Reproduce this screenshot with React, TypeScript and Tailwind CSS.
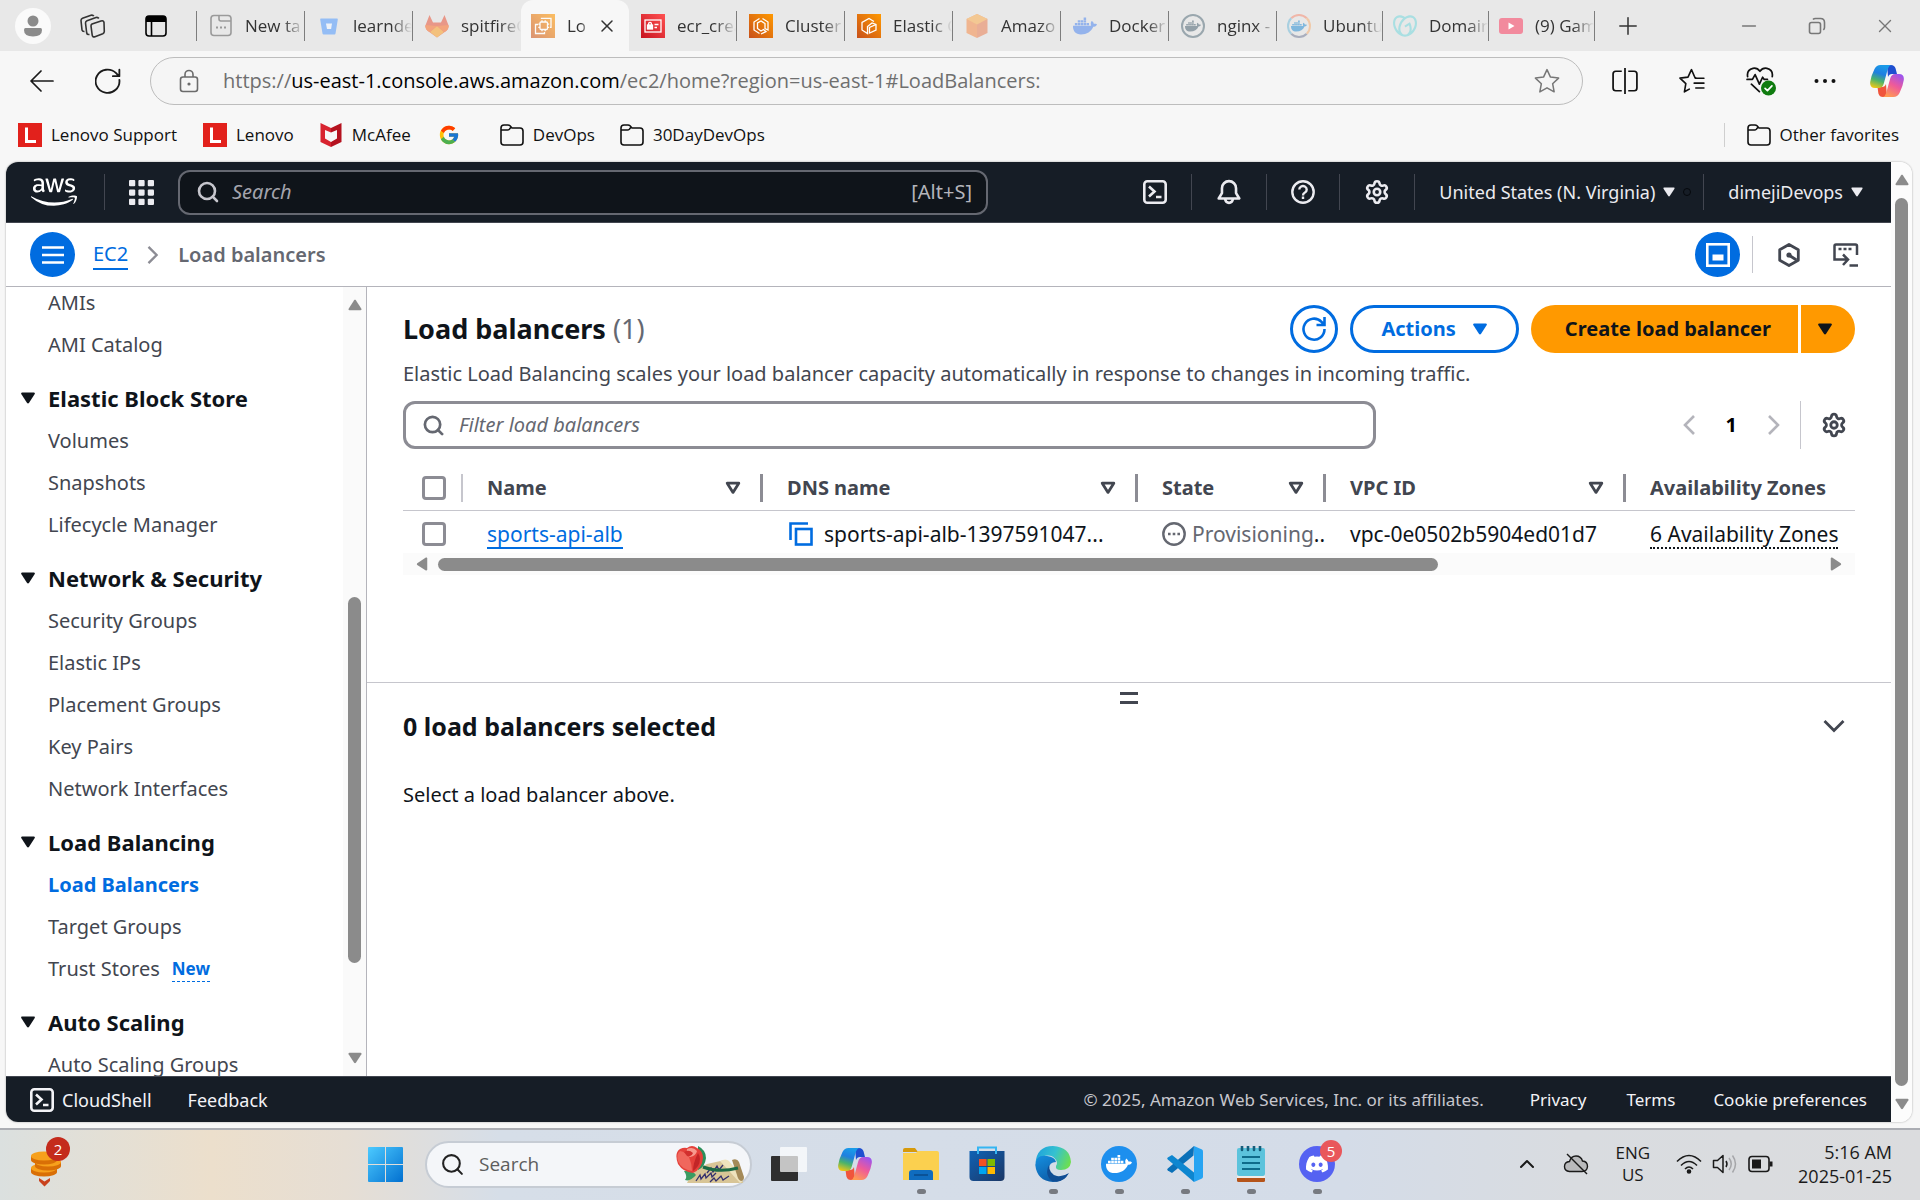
import React from "react";
import { Search, Settings, Plus, X, Minus, ChevronUp } from "lucide-react";
import { FaDocker, FaDiscord, FaAws } from "react-icons/fa6";
import { SiGodaddy } from "react-icons/si";
import { FcGoogle } from "react-icons/fc";

function Down({ className = "w-4 h-3" }: { className?: string }) {
  return (
    <svg viewBox="0 0 16 13" className={className} fill="currentColor" aria-hidden="true">
      <path d="M1.6 0.5h12.8c.9 0 1.3.9.9 1.6l-6.3 9.8c-.5.7-1.5.7-2 0L.7 2.1C.3 1.4.7.5 1.6.5z" />
    </svg>
  );
}

function SortArrow() {
  return (
    <svg viewBox="0 0 16 14" className="w-4 h-3.5" fill="none" stroke="currentColor" strokeWidth="2.8" strokeLinejoin="round" aria-hidden="true">
      <path d="M2.2 2.2h11.6L8 11.4z" />
    </svg>
  );
}

/* ---------- Browser icons ---------- */

function AwsTile({ kind }: { kind: "ec2" | "ecr" | "ecs" | "eb" }) {
  const from = kind === "ecr" ? "#c7131f" : "#c8511b";
  const to = kind === "ecr" ? "#ff5252" : "#ff9900";
  return (
    <svg viewBox="0 0 24 24" className={kind === "ec2" ? "size-6 opacity-60" : "size-6"} aria-hidden="true">
      <defs>
        <linearGradient id={"tile-" + kind} x1="0" y1="1" x2="1" y2="0">
          <stop offset="0" stopColor={from} />
          <stop offset="1" stopColor={to} />
        </linearGradient>
      </defs>
      <rect width="24" height="24" fill={"url(#tile-" + kind + ")"} />
      <g fill="none" stroke="#fff" strokeWidth="1.3">
        {kind === "ec2" && (
          <>
            <rect x="9" y="8" width="7.500" height="7.500" rx="1" />
            <path d="M11 8V6.300M14.200 8V6.300M11 17.200v-1.700M14.200 17.200v-1.700M9 10.200H7.300M9 13.300H7.300M18.200 10.200h-1.700M18.200 13.300h-1.700" />
            <path d="M10.500 5V4.300H20v9h-1M7 10.500H4.500v9h9V18" />
          </>
        )}
        {kind === "ecr" && (
          <>
            <rect x="4" y="6" width="16" height="12" />
            <rect x="6.500" y="11" width="5" height="4" fill="#fff" />
            <path d="M7.600 11V9.800a1.400 1.400 0 0 1 2.800 0V11M13.500 10.500h4M13.500 13.500h2.500" />
          </>
        )}
        {kind === "ecs" && (
          <path d="M10.500 4.500 5 8v8l5.500 3.500M13.500 4.500 19 8v8l-3-1.500v-5L12 7 8.500 9v5.500L12 17l2.500-1.500 2.500 2-5 2.500" />
        )}
        {kind === "eb" && (
          <path d="M17 7.500 12 4.500 5 8.500v7.500l5.500 3.500v-7l4.500-3.500 4 1.500v5.500L12.500 19v-5.500L19 10.500" />
        )}
      </g>
    </svg>
  );
}

function NewTabIcon() {
  return (
    <svg viewBox="0 0 24 24" className="size-6" fill="none" stroke="#9a9a9a" strokeWidth="1.600" aria-hidden="true">
      <rect x="2" y="1.500" width="20" height="20" rx="3" />
      <path d="M10 1.500V5q0 2 2 2h10" />
      <path d="M7 13.500h2M11 13.500h2M15 13.500h2" strokeWidth="2" />
    </svg>
  );
}

function BucketIcon() {
  return (
    <svg viewBox="0 0 24 24" className="size-6" aria-hidden="true">
      <path d="M4 4.500q-1 0-.8 1l2.300 14q.2 1 1.200 1h10.800q.9 0 1-.9L20.800 5.500q.2-1-.8-1z" fill="#94bdf5" />
      <path d="M9 9.500h6l-.9 5.500H10z" fill="#eef2f8" />
    </svg>
  );
}

function FoxIcon() {
  return (
    <svg viewBox="0 0 24 24" className="size-6 opacity-55" aria-hidden="true">
      <path d="M4.500 1 0.600 11q-1 3.500 2.200 6L12 23.500l9.200-6.500q3.200-2.500 2.200-6L19.500 1 16 8.500H8z" fill="#e8553b" />
      <path d="M12 23.500 5 18l7-6 7 6z" fill="#fca326" />
      <path d="m0.600 11 11.400 1-7 6-2.200-1Q-.4 14.500.6 11zM23.400 11 12 12l7 6 2.200-1q3.200-2.500 2.200-6z" fill="#fc6d26" />
    </svg>
  );
}

function CubeIcon() {
  return (
    <svg viewBox="0 0 24 24" className="size-6" aria-hidden="true">
      <path d="M12 0 1.500 5v14L12 24z" fill="#f0b590" />
      <path d="m12 0 10.500 5v14L12 24z" fill="#e9ae96" />
      <path d="M12 0 1.500 5 12 10.500 22.500 5z" fill="#f3c893" />
    </svg>
  );
}

function RingDocker({ color }: { color: boolean }) {
  return (
    <span className={"flex size-6 items-center justify-center rounded-full border-2 " + (color ? "border-t-[#f0b6a8] border-r-[#f0c9a8] border-b-[#a9aebd] border-l-[#a8cfe0]" : "border-[#9aa7ae]")}>
      <FaDocker className={"size-4 " + (color ? "text-[#7fb7dd]" : "text-[#93a0a8]")} />
    </span>
  );
}

function YoutubeIcon() {
  return (
    <svg viewBox="0 0 24 24" className="size-6" aria-hidden="true">
      <rect y="4" width="24" height="16" rx="3" fill="#f28a9d" />
      <path d="m9.500 8.500 6 3.500-6 3.500z" fill="#fff" />
    </svg>
  );
}

function Folder() {
  return (
    <svg viewBox="0 0 24 24" className="size-6" fill="none" stroke="#111" strokeWidth="1.600" strokeLinejoin="round" aria-hidden="true">
      <path d="M1 5q0-3 3-3h4q1.200 0 2 .8L12 5h8q3 0 3 3v11q0 3-3 3H4q-3 0-3-3z" />
      <path d="M1 7h6.500q1 0 1.800-.8L11 4.300" />
    </svg>
  );
}

function Lenovo() {
  return (
    <svg viewBox="0 0 24 24" className="size-6" aria-hidden="true">
      <rect width="24" height="24" fill="#e2211c" />
      <path d="M8.500 4.500v14H18" fill="none" stroke="#fff" strokeWidth="3" />
    </svg>
  );
}

function McAfee() {
  return (
    <svg viewBox="0 0 24 24" className="size-6" aria-hidden="true">
      <path d="M1.500 0 12 5v4.500L6 7v8.500l6 3.500v5L1.500 19z" fill="#d8232f" />
      <path d="M22.500 0 12 5v4.500L18 7v8.500L12 19v5l10.500-5z" fill="#b5121f" />
    </svg>
  );
}

function Copilot({ id, className = "size-[34px]" }: { id: string; className?: string }) {
  return (
    <svg viewBox="0 0 34 32" className={className} aria-hidden="true">
      <defs>
        <linearGradient id={id + "a"} x1="0.500" y1="0" x2="0.200" y2="1">
          <stop offset="0" stopColor="#1a9be8" />
          <stop offset="0.350" stopColor="#1f7fe0" />
          <stop offset="0.650" stopColor="#4bb36b" />
          <stop offset="1" stopColor="#f5c813" />
        </linearGradient>
        <linearGradient id={id + "b"} x1="0.800" y1="0" x2="0.300" y2="1">
          <stop offset="0" stopColor="#9a54f0" />
          <stop offset="0.500" stopColor="#ee5a9a" />
          <stop offset="1" stopColor="#ff9b52" />
        </linearGradient>
      </defs>
      <path d="M17 0h4q3.500 0 4.600 3.500L27 9h-5q-3 0-4 3z" fill="#1f4fd0" />
      <path d="M17 32h-4q-3.500 0-4.600-3.500L7.500 22H12q3 0 4-3z" fill="#f0553c" />
      <path d="M10.500 0H21q-2.300.8-3.200 4l-4 14.500q-1.200 4.500-5 4.500H5q-5.500 0-4.800-6Q1 11 4.500 4 6.500 0 10.500 0z" fill={"url(#" + id + "a)"} />
      <path d="M23.500 32H13q2.300-.8 3.200-4l4-14.500q1.200-4.500 5-4.500H29q5.500 0 4.800 6-.8 6-4.300 13-2 4-6 4z" fill={"url(#" + id + "b)"} />
    </svg>
  );
}

const tabs: { title: string; icon: React.ReactNode; active?: boolean }[] = [
  { title: "New ta", icon: <NewTabIcon /> },
  { title: "learnde", icon: <BucketIcon /> },
  { title: "spitfireG", icon: <FoxIcon /> },
  { title: "Lo", icon: <AwsTile kind="ec2" />, active: true },
  { title: "ecr_crea", icon: <AwsTile kind="ecr" /> },
  { title: "Cluster", icon: <AwsTile kind="ecs" /> },
  { title: "Elastic C", icon: <AwsTile kind="eb" /> },
  { title: "Amazo", icon: <CubeIcon /> },
  { title: "Docker", icon: <FaDocker className="size-6 text-[#94b3ec]" /> },
  { title: "nginx -", icon: <RingDocker color={false} /> },
  { title: "Ubuntu", icon: <RingDocker color /> },
  { title: "Domain", icon: <SiGodaddy className="size-6 text-[#a9dfe2]" /> },
  { title: "(9) Gam", icon: <YoutubeIcon /> },
];

function TabStrip() {
  return (
    <div className="flex h-[51px] shrink-0 items-center bg-[#e8e8e8] pl-[15px]">
      <button aria-label="Profile" className="flex size-9 items-center justify-center rounded-full bg-[#fafafa]">
        <svg viewBox="0 0 20 22" className="h-[22px] w-5" fill="#8b8b8b">
          <circle cx="10" cy="6" r="5.500" />
          <path d="M2.500 13h15q1.500 0 1.500 2 0 6.500-9 6.500T1 15q0-2 1.500-2z" />
        </svg>
      </button>
      <button aria-label="Workspaces" className="ml-[29px]">
        <svg viewBox="0 0 26 24" className="h-6 w-[26px]" fill="none" stroke="#333" strokeWidth="1.600" strokeLinejoin="round">
          <path d="m12 10 9-3q2.500-.8 3 1.500l.3 9q0 1.500-1.500 2.200l-7.800 3q-2.500.8-2.800-1.500L11 12q0-1.500 1-2z" />
          <path d="M9.500 20.500q-2.500.3-2.800-1.500L5.500 9q0-1.500 1.500-2.200l9-3.300q2-.5 2.800 1M4.500 17.500q-2 .2-2.500-1.500L1 6.500Q1 5 2.500 4.300L11 1.200q2-.5 2.800 1" />
        </svg>
      </button>
      <button aria-label="Tab actions" className="ml-[39px]">
        <svg viewBox="0 0 22 22" className="size-[22px]">
          <rect x="1" y="1" width="20" height="20" rx="3" fill="none" stroke="#000" strokeWidth="1.600" />
          <path d="M1 7V4q0-3 3-3h14q3 0 3 3v3z" />
          <path d="M6.500 7v14" stroke="#000" strokeWidth="1.600" />
        </svg>
      </button>
      <div className="ml-[29px] h-[30px] w-px bg-[#7d7d7d]" />
      <div className="flex h-full items-end" role="tablist">
        {tabs.map((t, i) => (
          <div
            key={t.title}
            role="tab"
            aria-selected={!!t.active}
            className={
              t.active
                ? "flex h-[51px] w-[108px] items-center rounded-t-xl bg-[#f7f7f7] pl-2.5"
                : i > 9
                  ? "flex h-[51px] w-[106px] items-center pl-2.5"
                  : "flex h-[51px] w-[108px] items-center pl-3"
            }
          >
            <span className="shrink-0">{t.icon}</span>
            <span className="ml-3 min-w-0 flex-1 overflow-hidden whitespace-nowrap text-[17px] leading-6 text-[#333] [mask-image:linear-gradient(to_right,#000_65%,transparent)]">
              {t.title}
            </span>
            {t.active ? (
              <button aria-label="Close tab" className="mr-3 ml-2 shrink-0 text-[#333]">
                <X className="size-5" strokeWidth={1.800} />
              </button>
            ) : t.title === "spitfireG" ? null : (
              <span className="h-[30px] w-px shrink-0 bg-[#7d7d7d]" />
            )}
          </div>
        ))}
      </div>
      <button aria-label="New tab" className="ml-[19px] text-[#333]">
        <Plus className="size-7" strokeWidth={1.300} />
      </button>
      <div className="ml-auto flex items-center gap-12 pr-6 text-[#777]">
        <button aria-label="Minimize"><Minus className="size-[22px]" strokeWidth={1.600} /></button>
        <button aria-label="Restore">
          <svg viewBox="0 0 18 18" className="size-[18px]" fill="none" stroke="currentColor" strokeWidth="1.600">
            <rect x="1.500" y="5.500" width="11" height="11" rx="2" />
            <path d="M5 2.500q.8-1 2.500-1h5q4 0 4 4v5q0 1.500-1.200 2.400" />
          </svg>
        </button>
        <button aria-label="Close"><X className="size-[22px]" strokeWidth={1.500} /></button>
      </div>
    </div>
  );
}

function Toolbar() {
  return (
    <div className="flex h-[60px] shrink-0 items-center pl-[29px] pr-4">
      <button aria-label="Back">
        <svg viewBox="0 0 24 22" className="h-[22px] w-[26px]" fill="none" stroke="#1a1a1a" strokeWidth="1.700" strokeLinecap="round" strokeLinejoin="round"><path d="M23 11H1.500M11 1 1 11l10 10" /></svg>
      </button>
      <button aria-label="Refresh" className="ml-10">
        <svg viewBox="0 0 24 24" className="size-[26px]" fill="none" stroke="#1a1a1a" strokeWidth="1.700" strokeLinecap="round" strokeLinejoin="round"><path d="M22.500 11A11 10.700 0 1 1 19.500 4.800L22 7.500M22.500 1.500v6h-6" /></svg>
      </button>
      <div className="ml-[29px] flex h-12 min-w-0 flex-1 items-center rounded-full border border-[#bdbdbd] bg-[#f5f5f5] px-[22px]">
        <svg viewBox="0 0 20 24" className="ml-1.5 h-6 w-5 shrink-0" fill="none" stroke="#6b6b6b" strokeWidth="1.600" aria-hidden="true">
          <rect x="1.500" y="8" width="17" height="14.500" rx="2.500" />
          <path d="M6 8V5.500a4 4 0 0 1 8 0V8" />
          <circle cx="10" cy="15" r="0.800" fill="#6b6b6b" />
        </svg>
        <p className="ml-6 flex-1 whitespace-nowrap text-[20px] leading-7 text-[#6f6f6f]">
          https://<span className="text-black">us-east-1.console.aws.amazon.com</span>/ec2/home?region=us-east-1#LoadBalancers:
        </p>
        <button aria-label="Add to favorites">
          <svg viewBox="0 0 24 24" className="size-[26px]" fill="none" stroke="#777" strokeWidth="1.400" strokeLinejoin="round"><path d="m12 1.500 3.200 6.900 7.500.9-5.500 5.200 1.400 7.500-6.600-3.700L5.400 22l1.400-7.500L1.300 9.300l7.500-.9z" /></svg>
        </button>
      </div>
      <div className="ml-[29px] flex items-center gap-[41px]">
        <button aria-label="Split screen">
          <svg viewBox="0 0 24 24" className="size-[26px]" fill="none" stroke="#111" strokeWidth="1.600"><path d="M9 3H3.500Q1 3 1 5.500v13Q1 21 3.500 21H9M15 3h5.500Q23 3 23 5.500v13q0 2.500-2.500 2.500H15M12 0v24" /></svg>
        </button>
        <button aria-label="Favorites">
          <svg viewBox="0 0 24 24" className="size-[26px]" fill="none" stroke="#111" strokeWidth="1.500" strokeLinejoin="round" strokeLinecap="round"><path d="M15.500 9H14.800L11.500 1.500 8.300 8.400.9 9.300l5.400 5.200L5 22l4.500-2.500M15 9.500h8M14 14h9M15.500 18.500H23" /></svg>
        </button>
        <button aria-label="Browser essentials">
          <svg viewBox="0 0 28 28" className="-mr-1 size-[30px]" fill="none" stroke="#111" strokeWidth="1.600" strokeLinejoin="round" strokeLinecap="round">
            <path d="M1.500 10Q.5 3.500 6.500 2.200 10.500 1.500 13 5q2.500-3.500 6.500-2.800 6 1.300 5 7.800M1 12.500h5L8.500 8l4 9 3-6.500 1.500 2h3M5 17l7.500 7" />
            <circle cx="21" cy="20.500" r="7" fill="#107c10" stroke="none" />
            <path d="m17.800 20.800 2.200 2.200 4.200-4.500" stroke="#fff" />
          </svg>
        </button>
        <button aria-label="Settings and more">
          <svg viewBox="0 0 24 24" className="size-6" fill="#111"><circle cx="3.500" cy="12" r="2" /><circle cx="12" cy="12" r="2" /><circle cx="20.500" cy="12" r="2" /></svg>
        </button>
        <button aria-label="Copilot" className="-ml-2"><Copilot id="tb" /></button>
      </div>
    </div>
  );
}

function Bookmark({ icon, label, gap }: { icon: React.ReactNode; label: string; gap: string }) {
  return (
    <a href="#" aria-label={label} className={"flex items-center gap-[9px] whitespace-nowrap " + gap}>
      {icon}
      {label !== "Google" && <span className="text-[17px] leading-6 text-[#111]">{label}</span>}
    </a>
  );
}

function FavoritesBar() {
  return (
    <nav aria-label="Favorites bar" className="flex h-[51px] shrink-0 items-center pb-[3px] pl-[18px] pr-[21px]">
      <Bookmark icon={<Lenovo />} label="Lenovo Support" gap="mr-[26px]" />
      <Bookmark icon={<Lenovo />} label="Lenovo" gap="mr-[25px]" />
      <Bookmark icon={<McAfee />} label="McAfee" gap="mr-[27px]" />
      <Bookmark icon={<FcGoogle className="size-[22px]" />} label="Google" gap="mr-10" />
      <Bookmark icon={<Folder />} label="DevOps" gap="mr-[25px]" />
      <Bookmark icon={<Folder />} label="30DayDevOps" gap="" />
      <div className="ml-auto mr-[22px] h-6 w-px bg-[#cfcfcf]" />
      <Bookmark icon={<Folder />} label="Other favorites" gap="" />
    </nav>
  );
}

/* ---------- Console ---------- */

function ShellIcon() {
  return (
    <svg viewBox="0 0 24 24" className="size-6 shrink-0" fill="none" stroke="currentColor" strokeWidth="2.600" aria-hidden="true">
      <rect x="1.300" y="1.300" width="21.400" height="21.400" rx="3" />
      <path d="m6 6.500 5.500 5L6 16.500M13 17h5.500" />
    </svg>
  );
}

function Divider() {
  return <div className="h-9 w-px shrink-0 bg-[#424650]" />;
}

function ConsoleHeader() {
  return (
    <header className="flex h-[61px] shrink-0 items-center border-b border-[#424650] bg-[#161d26] text-[#ebebf0]">
      <a href="#" aria-label="AWS home" className="ml-[25px]"><FaAws className="size-[46px] text-white" /></a>
      <div className="ml-[27px]"><Divider /></div>
      <button aria-label="Services" className="ml-6">
        <svg viewBox="0 0 24 24" className="size-[25px]" fill="currentColor">
          {[0, 9, 18].map((y) => [0, 9, 18].map((x) => <rect key={x + "-" + y} x={x} y={y} width="6" height="6" rx="1" />))}
        </svg>
      </button>
      <label className="ml-6 flex h-[45px] w-[810px] items-center rounded-xl border-2 border-[#656871] bg-[#0f141a] px-3.5 pl-4">
        <Search className="size-6 shrink-0 text-[#c6c6cd]" strokeWidth={2.600} />
        <input aria-label="Search" placeholder="Search" className="ml-3 min-w-0 flex-1 bg-transparent text-[20px] italic outline-none placeholder:text-[#a4a4ad]" />
        <span className="text-[20px] text-[#b4b4bb]">[Alt+S]</span>
      </label>
      <div className="ml-auto flex items-center">
        <button aria-label="CloudShell" className="mr-6"><ShellIcon /></button>
        <Divider />
        <button aria-label="Notifications" className="mx-6">
          <svg viewBox="0 0 24 24" className="size-[26px]" fill="none" stroke="currentColor" strokeWidth="2.400" strokeLinejoin="round">
            <path d="M2.500 18 5.500 13V8.500a6.500 6.500 0 0 1 13 0V13l3 5zM8.500 18.500a3.500 3.500 0 0 0 7 0" />
          </svg>
        </button>
        <Divider />
        <button aria-label="Help" className="mx-6">
          <svg viewBox="0 0 24 24" className="size-6" fill="none" stroke="currentColor" strokeWidth="2.400">
            <circle cx="12" cy="12" r="10.700" />
            <path d="M8.300 9.500a3.700 3.500 0 1 1 5.600 3q-1.900 1-1.900 3M12 16.600V19" />
          </svg>
        </button>
        <Divider />
        <button aria-label="Settings" className="mx-6"><Settings className="size-[26px]" strokeWidth={2.400} /></button>
        <Divider />
        <button className="ml-6 flex items-center gap-2 whitespace-nowrap text-[18px] leading-6">
          United States (N. Virginia)
          <Down className="w-3 h-3" />
        </button>
        <span className="ml-2 mr-3 size-2 rounded-full border border-[#05080c]" />
        <Divider />
        <button className="ml-6 mr-7 flex items-center gap-2 whitespace-nowrap text-[18px] leading-6">
          dimejiDevops
          <Down className="w-3 h-3" />
        </button>
      </div>
    </header>
  );
}

function BreadcrumbBar() {
  return (
    <div className="flex h-16 shrink-0 items-center border-b border-[#b4b4bb] bg-white pl-6 pr-8 text-[#424650]">
      <button aria-label="Menu" className="flex size-[45px] items-center justify-center rounded-full bg-[#006ce0]">
        <svg viewBox="0 0 22 18" className="h-[18px] w-[22px]" stroke="#fff" strokeWidth="2.600"><path d="M0 1.500h22M0 9h22M0 16.500h22" /></svg>
      </button>
      <nav aria-label="Breadcrumb" className="ml-[18px] flex items-center text-[20px] leading-7">
        <a href="#" className="border-b-2 border-[#006ce0] text-[#006ce0]">EC2</a>
        <svg viewBox="0 0 12 20" className="mx-[19px] h-[18px] w-3" fill="none" stroke="#8c8c94" strokeWidth="2.600"><path d="m1 1 9 9-9 9" /></svg>
        <span className="font-semibold text-[#656871]">Load balancers</span>
      </nav>
      <button aria-label="Split panel" className="ml-auto flex size-[45px] items-center justify-center rounded-full bg-[#006ce0]">
        <svg viewBox="0 0 24 24" className="size-6" fill="none" stroke="#fff" strokeWidth="2.600"><rect x="1.300" y="1.300" width="21.400" height="21.400" /><rect x="6.500" y="11.500" width="11" height="6" fill="#fff" stroke="none" /></svg>
      </button>
      <div className="ml-3 h-[37px] w-px bg-[#c6c6cd]" />
      <button aria-label="Amazon Q" className="ml-6">
        <svg viewBox="0 0 24 24" className="size-6" fill="none" stroke="currentColor" strokeWidth="2.800" strokeLinejoin="round"><path d="m12 1.500 9.300 5.200v10.600L12 22.500l-9.300-5.200V6.700z" /><path d="m12.500 12.500 7 4.500" /><circle cx="12" cy="12" r="2.600" fill="currentColor" stroke="none" /></svg>
      </button>
      <button aria-label="Session recorder" className="ml-8">
        <svg viewBox="0 0 26 24" className="h-6 w-[26px]" fill="none" stroke="currentColor" strokeWidth="2.500"><path d="M9 16.500H1.500V3q0-1.500 1.500-1.500h19.500Q24 1.500 24 3v9M5 16.500h9M10 11.500l5 5-5 5.500M16.500 22.500H25" /><path d="M5.500 6h3M10.500 6h3M15.500 6h3" strokeWidth="2.600" /></svg>
      </button>
    </div>
  );
}

const groups: { title?: string; items: string[] }[] = [
  { items: ["AMIs", "AMI Catalog"] },
  { title: "Elastic Block Store", items: ["Volumes", "Snapshots", "Lifecycle Manager"] },
  { title: "Network & Security", items: ["Security Groups", "Elastic IPs", "Placement Groups", "Key Pairs", "Network Interfaces"] },
  { title: "Load Balancing", items: ["Load Balancers", "Target Groups", "Trust Stores"] },
  { title: "Auto Scaling", items: ["Auto Scaling Groups"] },
];

function Sidebar() {
  return (
    <aside className="flex w-[361px] shrink-0 overflow-hidden border-r border-[#b4b4bb]">
      <nav aria-label="EC2" className="-mt-[5px] flex-1 pl-3.5">
        {groups.map((g, i) => (
          <section key={i}>
            {g.title && (
              <button className="mt-2.5 flex h-11 items-center gap-3 text-[22px] leading-7 font-bold text-[#0f141a]">
                <Down className="w-4 h-3" />
                {g.title}
              </button>
            )}
            <ul className="pl-7">
              {g.items.map((it) => (
                <li key={it} className="flex h-[42px] items-center text-[20px] leading-7 text-[#424650]">
                  <a href="#" className={it === "Load Balancers" ? "font-bold text-[#006ce0]" : ""}>{it}</a>
                  {it === "Trust Stores" && (
                    <a href="#" className="ml-3 border-b border-dashed border-[#006ce0] text-[17px] leading-6 font-bold text-[#006ce0]">New</a>
                  )}
                </li>
              ))}
            </ul>
          </section>
        ))}
      </nav>
      <div className="flex w-[23px] shrink-0 flex-col items-center bg-[#fafafa] py-3 text-[#8b8b8b]" aria-hidden="true">
        <Down className="h-3 w-3.5 rotate-180" />
        <div className="flex-[286]" />
        <div className="w-[13px] flex-[366] rounded-full bg-[#8b8b8b]" />
        <div className="flex-[89]" />
        <Down className="h-3 w-3.5" />
      </div>
    </aside>
  );
}

const box = "block size-6 appearance-none rounded-[4px] border-[3px] border-[#8c8c94] bg-white";

function Th({ children, last }: { children: React.ReactNode; last?: boolean }) {
  return (
    <th scope="col" className="h-11 p-0 text-left font-bold">
      <div className={last ? "flex h-7 items-center pl-6 whitespace-nowrap" : "flex h-7 items-center justify-between border-r-[3px] border-[#8c8c94] pl-6 pr-[19px]"}>
        {children}
        {!last && <SortArrow />}
      </div>
    </th>
  );
}

function LoadBalancerTable() {
  return (
    <div className="mt-[17px] overflow-hidden">
      <table className="w-full table-fixed border-collapse text-[20px] leading-7 text-[#0f141a]">
        <colgroup>
          <col className="w-[60px]" />
          <col className="w-[300px]" />
          <col className="w-[375px]" />
          <col className="w-[188px]" />
          <col className="w-[300px]" />
          <col />
        </colgroup>
        <thead className="border-b border-[#c6c6cd] text-[#424650]">
          <tr>
            <th scope="col" className="p-0">
              <div className="flex h-7 items-center border-r-2 border-[#c6c6cd] pl-[19px]">
                <input type="checkbox" aria-label="Select all" className={box} />
              </div>
            </th>
            <Th>Name</Th>
            <Th>DNS name</Th>
            <Th>State</Th>
            <Th>VPC ID</Th>
            <Th last>Availability Zones</Th>
          </tr>
        </thead>
        <tbody>
          <tr className="h-12 whitespace-nowrap text-[21px]">
            <td className="p-0 pl-[19px]"><input type="checkbox" aria-label="Select sports-api-alb" className={box} /></td>
            <td className="p-0 pl-6"><a href="#" className="inline-block border-b-2 border-[#006ce0] leading-[25px] text-[#006ce0]">sports-api-alb</a></td>
            <td className="p-0 pl-[26px]">
              <div className="flex items-center gap-[11px]">
                <button aria-label="Copy DNS name" className="text-[#006ce0]">
                  <svg viewBox="0 0 24 24" className="size-6" fill="none" stroke="currentColor" strokeWidth="2.600"><path d="M1.500 18V1.500H19" /><rect x="7" y="7" width="15.500" height="15.500" /></svg>
                </button>
                sports-api-alb-1397591047...
              </div>
            </td>
            <td className="p-0 pl-6">
              <div className="flex items-center gap-1.5 text-[#656871]">
                <svg viewBox="0 0 24 24" className="size-6 shrink-0" fill="none" stroke="currentColor" strokeWidth="2.400"><circle cx="12" cy="12" r="10.700" /><path d="M6 12h2.600M10.700 12h2.600M15.400 12H18" /></svg>
                <span>Provisioning<span className="text-[#0f141a]">..</span></span>
              </div>
            </td>
            <td className="p-0 pl-6">vpc-0e0502b5904ed01d7</td>
            <td className="p-0 pl-6"><button className="border-b-2 border-dotted border-[#0f141a] leading-[25px]">6 Availability Zones</button></td>
          </tr>
        </tbody>
      </table>
      <div className="-mt-[5px] flex h-[22px] items-center bg-[#fbfbfb] px-3 text-[#8b8b8b]" aria-hidden="true">
        <Down className="h-3 w-3.5 rotate-90" />
        <div className="ml-[9px] h-[13px] w-[70%] rounded-full bg-[#8b8b8b]" />
        <Down className="ml-auto h-3 w-3.5 -rotate-90" />
      </div>
    </div>
  );
}

function Chevron({ d }: { d: string }) {
  return <svg viewBox="0 0 12 20" className="h-5 w-3" fill="none" stroke="#b4b4bb" strokeWidth="2.600"><path d={d} /></svg>;
}

function MainPanel() {
  return (
    <main className="flex min-w-0 flex-1 flex-col bg-white">
      <section className="px-9 pt-[18px] pb-[107px]">
        <div className="flex items-center gap-3">
          <h1 className="flex-1 text-[27px] leading-9 font-bold text-[#0f141a]">
            Load balancers <span className="font-normal text-[#656871]">(1)</span>
          </h1>
          <button aria-label="Refresh" className="flex size-12 items-center justify-center rounded-full border-[3px] border-[#006ce0] text-[#006ce0]">
            <svg viewBox="0 0 24 24" className="size-6" fill="none" stroke="currentColor" strokeWidth="2.600"><path d="M22.500 12A10.500 10.500 0 1 1 19.500 4.800L22 7.500M22.500 0v8h-8" /></svg>
          </button>
          <button className="flex h-12 items-center gap-4 rounded-full border-[3px] border-[#006ce0] px-7 text-[20px] font-bold text-[#006ce0]">
            Actions <Down className="w-4 h-3" />
          </button>
          <div className="flex gap-[3px] text-[20px] font-bold text-[#0f141a]">
            <button className="h-12 rounded-l-full bg-[#ff9900] pl-[34px] pr-[27px]">Create load balancer</button>
            <button aria-label="More create options" className="flex h-12 w-[54px] items-center rounded-r-full bg-[#ff9900] pl-4"><Down className="w-4 h-3" /></button>
          </div>
        </div>
        <p className="mt-1.5 text-[20px] leading-[30px] text-[#424650]">
          Elastic Load Balancing scales your load balancer capacity automatically in response to changes in incoming traffic.
        </p>
        <div className="mt-3 flex items-center">
          <label className="flex h-12 w-[67%] items-center rounded-xl border-[3px] border-[#8c8c94] px-4">
            <Search className="size-[23px] shrink-0 text-[#656871]" strokeWidth={2.800} />
            <input aria-label="Filter load balancers" placeholder="Filter load balancers" className="ml-3.5 min-w-0 flex-1 bg-transparent text-[20px] italic outline-none placeholder:text-[#656871]" />
          </label>
          <button aria-label="Previous page" className="ml-auto"><Chevron d="m11 1-9 9 9 9" /></button>
          <span className="mx-[31px] text-[20px] leading-7 font-bold">1</span>
          <button aria-label="Next page"><Chevron d="m1 1 9 9-9 9" /></button>
          <div className="ml-5 h-12 w-px bg-[#c6c6cd]" />
          <button aria-label="Preferences" className="ml-5 mr-2 text-[#424650]"><Settings className="size-[26px]" strokeWidth={2.600} /></button>
        </div>
        <LoadBalancerTable />
      </section>
      <section className="flex-1 border-t border-[#c6c6cd] px-9 pt-[9px]">
        <div className="mx-auto h-3 w-[18px] border-y-[3px] border-[#424650]" />
        <div className="mt-1 flex items-center justify-between">
          <h2 className="text-[25px] leading-9 font-bold text-[#0f141a]">0 load balancers selected</h2>
          <button aria-label="Collapse" className="mr-2.5"><svg viewBox="0 0 22 14" className="h-3.5 w-[22px]" fill="none" stroke="#424650" strokeWidth="2.800"><path d="m1.500 2 9.500 9.500L20.500 2" /></svg></button>
        </div>
        <p className="mt-9 text-[20px] leading-[30px] text-[#0f141a]">Select a load balancer above.</p>
      </section>
    </main>
  );
}

function ConsoleFooter() {
  return (
    <footer className="flex h-[46px] shrink-0 items-center border-t border-[#424650] bg-[#161d26] px-6 text-[17px] leading-6 text-[#f3f3f7]">
      <button className="flex items-center gap-2 text-[18px]"><ShellIcon />CloudShell</button>
      <a href="#" className="ml-9 text-[18px]">Feedback</a>
      <span className="ml-auto text-[#c6c6cd]">© 2025, Amazon Web Services, Inc. or its affiliates.</span>
      <a href="#" className="ml-[46px]">Privacy</a>
      <a href="#" className="ml-10">Terms</a>
      <a href="#" className="ml-[38px]">Cookie preferences</a>
    </footer>
  );
}

/* ---------- Taskbar ---------- */

function Coins() {
  return (
    <svg viewBox="0 0 42 46" className="h-[46px] w-[42px]" aria-hidden="true">
      {[[14, 27], [18, 21], [14, 15]].map(([x, y]) => (
        <g key={y}>
          <path d={`M${x - 13} ${y}v4a13 4.500 0 0 0 26 0v-4z`} fill="#d96f06" />
          <ellipse cx={x} cy={y} rx="13" ry="4.500" fill="#f7a01c" />
        </g>
      ))}
      <path d="m9 37 5.500 3.500L20 37v3l-5.500 5.500L9 40z" fill="#c9421d" />
    </svg>
  );
}

function Rose() {
  return (
    <svg viewBox="0 0 70 38" className="h-[38px] w-[70px]" aria-hidden="true">
      <path d="M11 38q4-12 20-19l18-4 15 12 3 11z" fill="#d8c596" />
      <path d="M44 16q6-3 9 0l13 16q2 4-2 6z" fill="#efe3bd" />
      <path d="M56 15q5-2 7 2l5 15q0 4-3 4-3-1-4-6z" fill="#a48a58" />
      <path d="m20 36 4-6 1 4 4-5 1 4 5-5 1 4 4-4M31 28l4-5 2 4 4-6 2 4 4-5M34 37l4-4 2 3 5-5 2 4 6-4" fill="none" stroke="#34306e" strokeWidth="1.300" />
      <path d="M22 1q8 4 8 12-1 9-8 12z" fill="#2b8f5a" />
      <path d="M27 22q16 6 35 1" fill="none" stroke="#1d6b45" strokeWidth="3" />
      <path d="M8 26q8-1 12 4-6 7-11 5 3-3-1-9z" fill="#3a9c62" />
      <path d="M11 3q5-4 10 0 6 3 6 10-1 11-10 15Q7 27 2 19-2 8 4 4q4-2 7-1z" fill="#e4403a" />
      <path d="M4 6q6 1 9 6 3 7 3 14Q5 24 2 16 0 9 4 6z" fill="#f0675d" />
      <path d="M11 4q6-3 10 2-1 5-7 6-4-3-3-8z" fill="#f79a8e" />
      <path d="M22 8q4 6 0 13-3 4-5 5 0-8 5-18z" fill="#c22527" />
      <path d="M8 7q5-3 9 1-2 4-6 3z" fill="#d22f2e" />
    </svg>
  );
}

function TaskView() {
  return (
    <svg viewBox="0 0 36 36" className="size-9" aria-hidden="true">
      <rect y="10" width="27" height="25" rx="1" fill="#2e2e2e" />
      <rect x="9" y="1" width="27" height="25" rx="1" fill="#fff" fillOpacity="0.720" />
    </svg>
  );
}

function FolderTask() {
  return (
    <svg viewBox="0 0 36 36" className="size-9" aria-hidden="true">
      <path d="M0 4q0-2 2-2h10l3 4H0z" fill="#d79a0b" />
      <path d="M0 7h13l2-2h19q2 0 2 2v27H0z" fill="#fbd04f" />
      <path d="M6 34v-7q0-3 3-3h18q3 0 3 3v7z" fill="#0f6cbf" />
      <path d="M11 29h14" stroke="#0a4a8a" strokeWidth="1.500" />
    </svg>
  );
}

function Store() {
  return (
    <svg viewBox="0 0 36 36" className="size-9" aria-hidden="true">
      <defs><linearGradient id="store" x1="0" y1="0" x2="1" y2="1"><stop stopColor="#0f62b5" /><stop offset="1" stopColor="#1c3765" /></linearGradient></defs>
      <path d="M0.500 5h35v26q0 4-4 4h-27q-4 0-4-4z" fill="url(#store)" />
      <path d="M9 8V1.500h18V8" fill="none" stroke="#35b5f2" strokeWidth="2" />
      <rect x="10" y="13" width="7.500" height="7" fill="#f25022" />
      <rect x="18.500" y="13" width="7.500" height="7" fill="#7fba00" />
      <rect x="10" y="21" width="7.500" height="7" fill="#00a4ef" />
      <rect x="18.500" y="21" width="7.500" height="7" fill="#ffb900" />
    </svg>
  );
}

function Edge() {
  return (
    <svg viewBox="0 0 36 36" className="size-9" aria-hidden="true">
      <defs>
        <linearGradient id="edgeTop" x1="0" y1="0.300" x2="1" y2="0.600"><stop stopColor="#1fa3dc" /><stop offset="0.500" stopColor="#35c1d0" /><stop offset="1" stopColor="#6ddf4f" /></linearGradient>
        <linearGradient id="edgeLow" x1="0" y1="0" x2="0.600" y2="1"><stop stopColor="#1590e0" /><stop offset="1" stopColor="#0c59a4" /></linearGradient>
      </defs>
      <path d="M0.500 17Q2 0 18 0q17 1 18 16-1 8-10 8-6 0-5-4 2-3 0-6-5-7-14-3-5 2-6.500 6z" fill="url(#edgeTop)" />
      <path d="M0.300 19Q1 8 12 10q8 1 9 6-7 0-7 7 1 7 9 8 5 0 10-3-5 8-15 8Q2 35 .3 19z" fill="url(#edgeLow)" />
      <path d="M14 19q-5 9 3 16 11 3 17-8-6 4-12 3-8-2-8-11z" fill="#0f4d94" />
    </svg>
  );
}

function VsCode() {
  return (
    <svg viewBox="0 0 36 36" className="size-9" aria-hidden="true">
      <path d="m27 0-.5 9.500L5 27 .8 24.500Q-.3 23.500.8 22.500z" fill="#0a70b8" />
      <path d="M27 36v-9.500L5 9 .8 11.500q-1.100 1 0 2z" fill="#0d86d0" />
      <path d="m27 0 8 3.500q1 .5 1 2v25q0 1.500-1 2L27 36z" fill="#27a4f2" />
    </svg>
  );
}

function Notepad() {
  return (
    <svg viewBox="0 0 36 36" className="size-9" aria-hidden="true">
      <rect x="4" y="28" width="28" height="8" rx="1.500" fill="#b5541a" />
      <rect x="4" y="28" width="28" height="4" fill="#f1ece8" />
      <rect x="4" y="2" width="28" height="28" rx="2" fill="#5cc3dc" />
      <path d="M9 11h18M9 17h18M9 23h18" stroke="#0f6b8a" strokeWidth="2" />
      <path d="M9 0v4M15 0v4M21 0v4M27 0v4" stroke="#155e7b" strokeWidth="2.600" strokeLinecap="round" />
    </svg>
  );
}

function TaskItem({ label, running, children }: { label: string; running?: boolean; children: React.ReactNode }) {
  return (
    <button aria-label={label} className="relative flex h-full w-[66px] items-center justify-center">
      {children}
      {running && <span className="absolute bottom-1 h-[5px] w-[9px] rounded-full bg-[#777a80]" />}
    </button>
  );
}

function Taskbar() {
  return (
    <footer className="flex h-[72px] shrink-0 items-center border-t-2 border-[#abadb3] bg-[linear-gradient(90deg,#dbe0df_0%,#ecdfcc_11%,#e6ded4_18%,#d6dee8_26%,#d4dce8_70%,#d9dce0_82%,#dbdcde_100%)] pb-0.5">
      <button aria-label="Widgets" className="relative ml-[30px]">
        <Coins />
        <span className="absolute -top-1 left-4 flex size-6 items-center justify-center rounded-full bg-[#c42b1c] text-[15px] text-white">2</span>
      </button>
      <button aria-label="Start" className="ml-[296px]">
        <svg viewBox="0 0 35 35" className="size-[35px]">
          <defs><linearGradient id="win" x1="0" y1="0" x2="1" y2="1"><stop stopColor="#4ccaff" /><stop offset="1" stopColor="#0270d0" /></linearGradient></defs>
          <path fill="url(#win)" d="M0 1q0-1 1-1h16v17H0zM18 0h16q1 0 1 1v16H18zM0 18h17v17H1q-1 0-1-1zM18 18h17v16q0 1-1 1H18z" />
        </svg>
      </button>
      <label className="ml-[22px] mr-1 flex h-[47px] w-[327px] items-center rounded-full border-2 border-[#c6ccd4] bg-[#f4f6f9] pl-[13px] pr-1">
        <Search className="size-[25px] shrink-0 text-[#222]" strokeWidth={2} />
        <input aria-label="Search Windows" placeholder="Search" className="ml-3.5 min-w-0 flex-1 bg-transparent text-[19px] outline-none placeholder:text-[#5d5d5d]" />
        <Rose />
      </label>
      <TaskItem label="Task view"><TaskView /></TaskItem>
      <TaskItem label="Copilot"><Copilot id="tk" /></TaskItem>
      <TaskItem label="File Explorer" running><FolderTask /></TaskItem>
      <TaskItem label="Microsoft Store"><Store /></TaskItem>
      <TaskItem label="Edge" running><Edge /></TaskItem>
      <TaskItem label="Docker" running>
        <span className="flex size-9 items-center justify-center rounded-full bg-[#1d8fee]"><FaDocker className="size-[26px] text-white" /></span>
      </TaskItem>
      <TaskItem label="Visual Studio Code" running><VsCode /></TaskItem>
      <TaskItem label="Notepad" running><Notepad /></TaskItem>
      <TaskItem label="Discord" running>
        <span className="flex size-9 items-center justify-center rounded-full bg-[#5562f2]"><FaDiscord className="size-6 text-white" /></span>
        <span className="absolute top-2.5 right-2 flex size-[22px] items-center justify-center rounded-full bg-[#e9575b] text-[15px] text-white">5</span>
      </TaskItem>
      <div className="ml-auto flex items-center pr-7 text-[#1a1a1a]">
        <button aria-label="Show hidden icons"><ChevronUp className="size-6" strokeWidth={2} /></button>
        <svg viewBox="0 0 26 22" className="ml-6 h-[22px] w-[26px]" fill="#b9babc" stroke="#1a1a1a" strokeWidth="1.400" role="img" aria-label="OneDrive paused">
          <path d="M6.500 8.500Q8 3 13 3q5 0 6.500 5 5 .5 5 5.500-.5 5-5.500 5H6.500q-5-.5-5-5 0-4.500 5-5z" />
          <path d="m4 1 20 20" />
        </svg>
        <div className="ml-[26px] text-center text-[17px] leading-[22px]">ENG<br />US</div>
        <svg viewBox="0 0 26 20" className="ml-[26px] h-5 w-[26px]" fill="none" stroke="#1a1a1a" strokeWidth="1.600" role="img" aria-label="Wi-Fi">
          <path d="M1 7.500q12-12 24 0M5 11.500q8-8 16 0M9 15q4-4 8 0" />
          <circle cx="13" cy="17.500" r="1.500" fill="#1a1a1a" />
        </svg>
        <svg viewBox="0 0 26 20" className="ml-2.5 h-5 w-[26px]" fill="none" stroke="#1a1a1a" strokeWidth="1.500" strokeLinejoin="round" role="img" aria-label="Volume">
          <path d="M1.500 6.500h4L11 1.500v17l-5.500-5h-4zM14 7q2 3 0 6" />
          <path d="M17 4q4.500 6 0 12M20.500 1.500q6 8.500 0 17" stroke="#a5a6a9" />
        </svg>
        <svg viewBox="0 0 26 18" className="ml-2.5 h-[18px] w-[26px]" fill="none" stroke="#1a1a1a" strokeWidth="1.600" role="img" aria-label="Battery">
          <rect x="1" y="1.500" width="20" height="15" rx="3" />
          <rect x="4" y="4.500" width="9" height="9" fill="#1a1a1a" stroke="none" />
          <path d="M23 6.500v5" strokeWidth="3" />
        </svg>
        <div className="ml-6 text-right text-[18px] leading-6">5:16 AM<br />2025-01-25</div>
      </div>
    </footer>
  );
}

export default function App() {
  return (
    <div className="flex h-screen flex-col overflow-hidden bg-[#f7f7f7] font-['Open_Sans','Noto_Sans',sans-serif]">
      <TabStrip />
      <Toolbar />
      <FavoritesBar />
      <div className="mb-1.5 ml-1.5 mr-2 flex min-h-0 flex-1 overflow-hidden rounded-xl bg-white font-['Noto_Sans','Open_Sans',sans-serif] shadow-[0_0_2px_#999]">
        <div className="flex min-w-0 flex-1 flex-col">
          <ConsoleHeader />
          <BreadcrumbBar />
          <div className="flex min-h-0 flex-1">
            <Sidebar />
            <MainPanel />
          </div>
          <ConsoleFooter />
        </div>
        <div className="flex w-[21px] shrink-0 flex-col items-center bg-[#fcfcfc] py-3 text-[#8b8b8b]" aria-hidden="true">
          <Down className="h-3 w-3.5 rotate-180" />
          <div className="my-3 w-[13px] flex-1 rounded-full bg-[#8b8b8b]" />
          <Down className="h-3 w-3.5" />
        </div>
      </div>
      <Taskbar />
    </div>
  );
}
